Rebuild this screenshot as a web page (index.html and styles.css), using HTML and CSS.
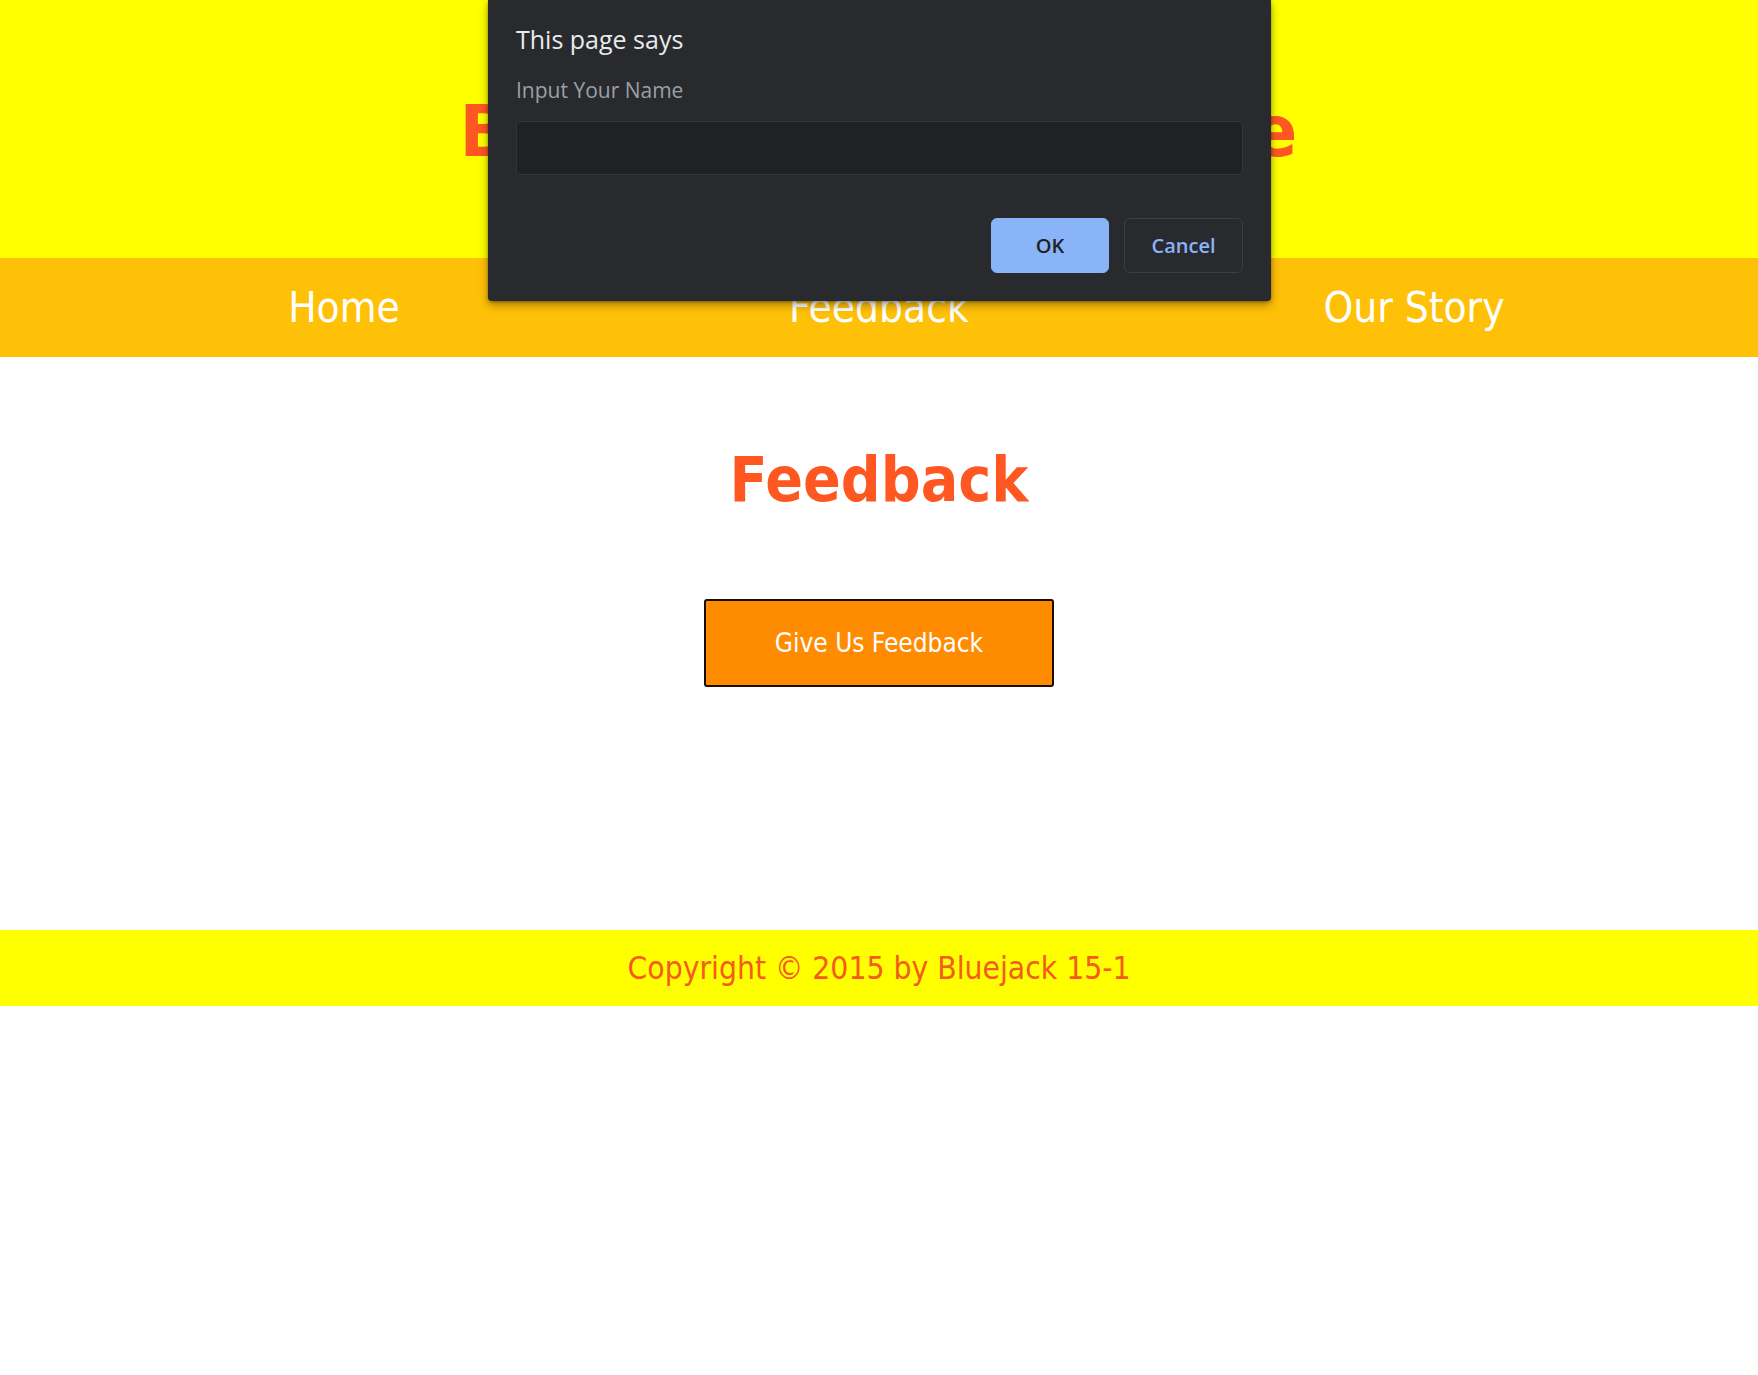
FILE: index.html
```html
<!DOCTYPE html>
<html lang="en">
<head>
<meta charset="utf-8">
<title>Feedback</title>
<link rel="stylesheet" href="styles.css">
</head>
<body>
<header class="site-header">
  <h1 class="site-title">Bluejack Coffee House</h1>
</header>
<nav class="site-nav">
  <a class="nav-item" href="#">Home</a>
  <a class="nav-item" href="#">Feedback</a>
  <a class="nav-item" href="#">Our Story</a>
</nav>
<main class="content">
  <h2 class="page-title">Feedback</h2>
  <button class="feedback-btn" type="button">Give Us Feedback</button>
</main>
<footer class="site-footer">Copyright © 2015 by Bluejack 15-1</footer>

<div class="prompt" role="dialog">
  <div class="prompt-title">This page says</div>
  <div class="prompt-message">Input Your Name</div>
  <div class="prompt-input"></div>
  <div class="prompt-actions">
    <button class="prompt-btn prompt-ok" type="button">OK</button>
    <button class="prompt-btn prompt-cancel" type="button">Cancel</button>
  </div>
</div>
</body>
</html>
```

FILE: styles.css
```css
html, body {
  margin: 0;
  padding: 0;
  background: #ffffff;
}

body {
  font-family: "DejaVu Sans Condensed", "DejaVu Sans", sans-serif;
}

.site-header {
  height: 258px;
  box-sizing: border-box;
  padding-top: 89px;
  background: #ffff00;
  text-align: center;
}

.site-title {
  margin: 0;
  font-size: 72px;
  line-height: 84px;
  letter-spacing: 1px;
  font-weight: bold;
  color: #ff5722;
}

.site-nav {
  height: 99px;
  background: #ffc107;
  display: flex;
  justify-content: center;
  align-items: center;
}

.nav-item {
  width: 535px;
  text-align: center;
  color: #ffffff;
  text-decoration: none;
  font-size: 42px;
  line-height: 99px;
}

.content {
  height: 573px;
  box-sizing: border-box;
  padding-top: 88px;
  display: flex;
  flex-direction: column;
  align-items: center;
}

.page-title {
  margin: 0 0 84px;
  font-size: 62px;
  line-height: 70px;
  font-weight: bold;
  color: #ff5722;
}

.feedback-btn {
  width: 350px;
  height: 88px;
  box-sizing: border-box;
  border: 2px solid #1a0d00;
  border-radius: 3px;
  background: #ff8c00;
  color: #ffffff;
  font-family: "DejaVu Sans Condensed", "DejaVu Sans", sans-serif;
  font-size: 26px;
  padding: 0;
}

.site-footer {
  height: 76px;
  background: #ffff00;
  color: #f55a1e;
  font-size: 31.5px;
  line-height: 76px;
  text-align: center;
}

/* Browser prompt dialog (dark) */
.prompt {
  position: absolute;
  top: 0;
  left: 488px;
  width: 783px;
  box-sizing: border-box;
  padding: 23px 28px 28px;
  background: #292a2d;
  border-radius: 0 0 4px 4px;
  box-shadow: 0 4px 10px rgba(0, 0, 0, 0.35), 0 1px 3px rgba(0, 0, 0, 0.3);
  font-family: "Open Sans", "Noto Sans", sans-serif;
}

.prompt-title {
  font-size: 25px;
  line-height: 32px;
  color: #e8eaed;
}

.prompt-message {
  margin-top: 21px;
  font-size: 21px;
  line-height: 28px;
  color: #9aa0a6;
}

.prompt-input {
  margin-top: 17px;
  height: 54px;
  box-sizing: border-box;
  background: #202124;
  border: 1px solid #35363a;
  border-radius: 4px;
}

.prompt-actions {
  margin-top: 43px;
  display: flex;
  justify-content: flex-end;
  gap: 15px;
}

.prompt-btn {
  width: 118px;
  height: 55px;
  box-sizing: border-box;
  border-radius: 6px;
  font-family: "Open Sans", "Noto Sans", sans-serif;
  font-size: 20px;
  font-weight: 600;
  padding: 0;
}

.prompt-ok {
  background: #8ab4f8;
  border: 1px solid #8ab4f8;
  color: #202124;
}

.prompt-cancel {
  width: 119px;
  background: transparent;
  border: 1px solid #3c4043;
  color: #8ab4f8;
}
```
